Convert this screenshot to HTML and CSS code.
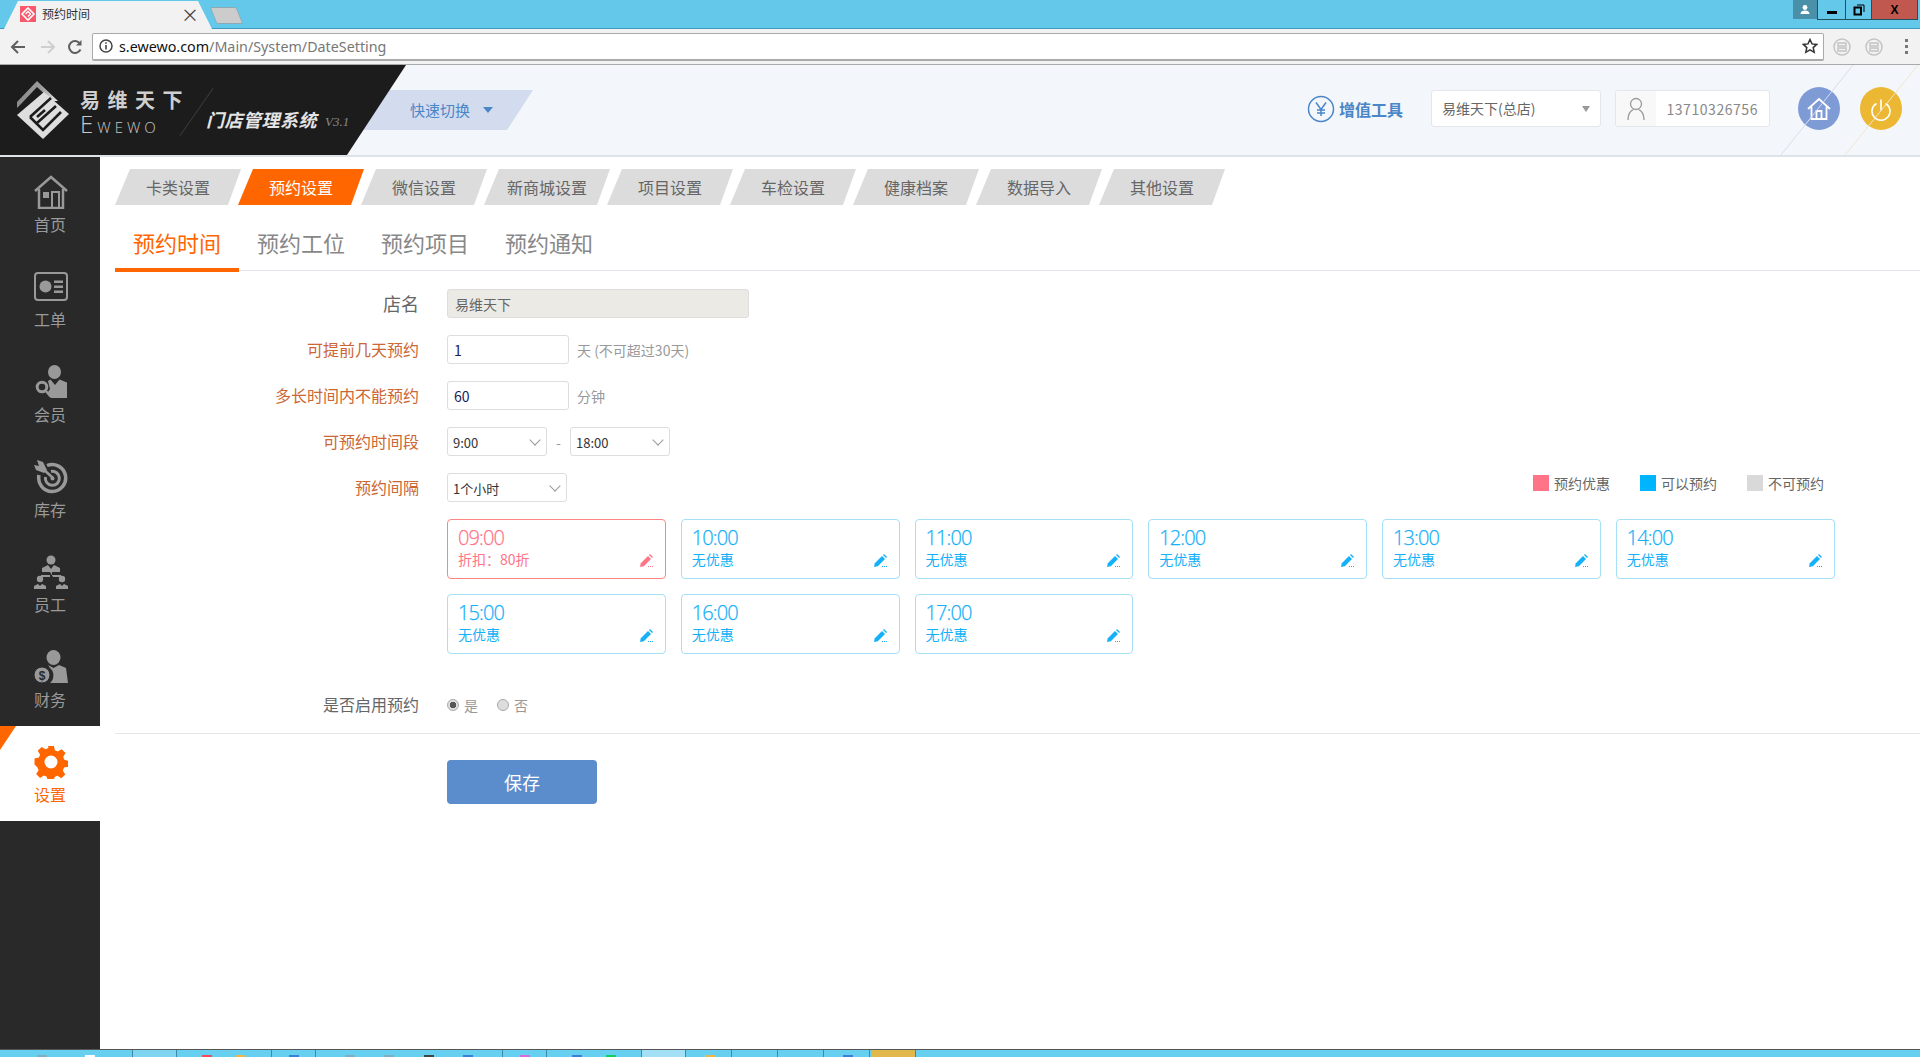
FILE: index.html
```html
<!DOCTYPE html>
<html lang="zh-CN">
<head>
  <meta charset="UTF-8" />
  <title>预约时间</title>
  <link rel="stylesheet" href="styles.css">
</head>
<body>
  <!-- browser window -->
  <div class="tabstrip">
    <div class="tab">
      <svg class="favicon" viewBox="0 0 16 16"><rect width="16" height="16" fill="#f9596a"/><path d="M8 2l6 6-6 6-6-6z" fill="none" stroke="#fff" stroke-width="1.6"/><path d="M5.5 8L8 5.5 10.5 8 8 10.5" fill="none" stroke="#fff" stroke-width="1.3"/></svg>
      <span class="tab-title">预约时间</span>
      <span class="tab-close">×</span>
    </div>
    <div class="newtab"></div>
    <div class="winbtns">
      <div class="win-user"><svg viewBox="0 0 12 12" width="12" height="12"><circle cx="6" cy="3.5" r="2.4" fill="#fff"/><path d="M1.5 10c0-2.500 2-3.500 4.500-3.500s4.500 1 4.500 3.500z" fill="#fff"/></svg></div>
      <div class="win-btn win-min"><i></i></div>
      <div class="win-btn win-max"><svg viewBox="0 0 12 12" width="12" height="12"><rect x="1.500" y="3.500" width="6.500" height="7" fill="none" stroke="#000" stroke-width="2"/><path d="M4 1h7v7" fill="none" stroke="#000"/></svg></div>
      <div class="win-btn win-close">X</div>
    </div>
  </div>
  <div class="toolbar">
    <svg class="nav-ico" viewBox="0 0 16 16"><path d="M15 8H2M8 2L2 8l6 6" fill="none" stroke="#5f5f5f" stroke-width="2"/></svg>
    <svg class="nav-ico" viewBox="0 0 16 16"><path d="M1 8h13M8 2l6 6-6 6" fill="none" stroke="#cfcfcf" stroke-width="2"/></svg>
    <svg class="nav-ico" viewBox="0 0 16 16"><path d="M13.500 10.500A6 6 0 1 1 13 4.500" fill="none" stroke="#5f5f5f" stroke-width="2"/><path d="M14.500 1v5.500H9z" fill="#5f5f5f"/></svg>
    <div class="omnibox">
      <svg class="info-ico" viewBox="0 0 14 14"><circle cx="7" cy="7" r="6" fill="none" stroke="#444" stroke-width="1.500"/><path d="M7 6v4.500M7 3.300v1.500" stroke="#444" stroke-width="1.600"/></svg>
      <span class="url"><b>s.ewewo.com</b>/Main/System/DateSetting</span>
      <svg class="star-ico" viewBox="0 0 16 16"><path d="M8 1.500l2 4.400 4.700.5-3.500 3.200 1 4.700L8 11.900l-4.200 2.400 1-4.700L1.300 6.400 6 5.900z" fill="none" stroke="#333" stroke-width="1.500"/></svg>
    </div>
    <div class="ext"><svg viewBox="0 0 18 18"><circle cx="9" cy="9" r="8" fill="none" stroke="#c4c4c4" stroke-width="1.500"/><path d="M5 5h8v3H5zM5 10h8v3H5z" fill="none" stroke="#c4c4c4" stroke-width="1.500"/></svg></div>
    <div class="ext"><svg viewBox="0 0 18 18"><circle cx="9" cy="9" r="8" fill="none" stroke="#c4c4c4" stroke-width="1.500"/><path d="M5 5h8v3H5zM5 10h8v3H5z" fill="none" stroke="#c4c4c4" stroke-width="1.500"/></svg></div>
    <div class="dots"><i></i><i></i><i></i></div>
  </div>

  <!-- app header -->
  <header class="topbar">
    <div class="brand">
      <svg class="brand-mark" viewBox="0 0 54 60">
        <defs><linearGradient id="chev" x1="0" y1="0" x2="1" y2="0"><stop offset="0" stop-color="#8a8a8a"/><stop offset=".6" stop-color="#9c9c9c"/><stop offset="1" stop-color="#ececec"/></linearGradient></defs>
        <path d="M1 22L21 1 42 21 36 21 21 7 5 24 1 28z" fill="url(#chev)"/>
        <path d="M1 35L28 12 53 34 27 59z" fill="#dedede"/>
        <path d="M14 37L35 18M14 37L27 50L45 32M21 37L29 30M21 43L40 26" fill="none" stroke="#1c1c1c" stroke-width="2.600"/>
      </svg>
      <div class="brand-name">
        <div class="brand-cn">易维天下</div>
        <div class="brand-en"><span>E</span>WEWO</div>
      </div>
      <div class="brand-slash"></div>
      <div class="brand-sys">门店管理系统</div>
      <div class="brand-ver">V3.1</div>
    </div>
    <div class="quick">快速切换<i class="caret"></i></div>
    <div class="topbar-right">
      <div class="addon">
        <svg viewBox="0 0 28 28" width="28" height="28"><circle cx="14" cy="14" r="12.500" fill="none" stroke="#4a86c8" stroke-width="1.500"/><path d="M9 7.500l5 7 5-7M14 14.500V21M10 15h8M10 18h8" fill="none" stroke="#4a86c8" stroke-width="1.500"/></svg>
        <span>增值工具</span>
      </div>
      <div class="shop">易维天下(总店)<i class="caret caret-gray"></i></div>
      <div class="account">
        <div class="account-ico"><svg viewBox="0 0 18 24" width="18" height="24"><circle cx="9" cy="7" r="5.500" fill="none" stroke="#999" stroke-width="1.300"/><path d="M1 23c0-6 3-9.500 5.500-10.500M17 23c0-6-3-9.500-5.500-10.500" fill="none" stroke="#999" stroke-width="1.300"/></svg></div>
        <div class="account-no">13710326756</div>
      </div>
      <div class="round round-home"><svg viewBox="0 0 24 24" width="24" height="24"><path d="M1 12L12 2l11 10M4.500 10v12h15V10M9.500 22v-8h5v8" fill="none" stroke="#fff" stroke-width="1.800"/></svg></div>
      <div class="round round-power"><svg viewBox="0 0 24 24" width="24" height="24"><path d="M7.500 6.500a9 9 0 1 0 9 0M12 2.500v11" fill="none" stroke="#fff" stroke-width="1.600"/></svg></div>
    </div>
    <svg class="topbar-deco" viewBox="0 0 140 90" width="140" height="90"><path d="M73 0L1 90" stroke="#d9def0"/><path d="M138 0L65 90" stroke="#f0e6cf"/></svg>
  </header>

  <div class="app">
    <aside class="sidebar">
      <a class="side-item">
        <svg viewBox="0 0 34 34"><path d="M1 16L17 2l16 14" fill="none" stroke="#999" stroke-width="2.500"/><path d="M5 14v19h24V14" fill="none" stroke="#999" stroke-width="2.500"/><rect x="9" y="17" width="6" height="6" fill="#999"/><path d="M18 33V17h7v16" fill="none" stroke="#999" stroke-width="2"/></svg>
        <span>首页</span>
      </a>
      <a class="side-item">
        <svg viewBox="0 0 34 34"><rect x="1" y="3" width="32" height="27" rx="3" fill="none" stroke="#999" stroke-width="2"/><circle cx="11.500" cy="16.500" r="6" fill="#999"/><path d="M20 10.500h9v2.500h-9zM20 15.500h9V18h-9zM20 20.500h9V23h-9z" fill="#999"/></svg>
        <span>工单</span>
      </a>
      <a class="side-item">
        <svg viewBox="0 0 34 34"><ellipse cx="20.500" cy="7" rx="6.500" ry="7" fill="#999"/><path d="M14 16l2.500-1.500L21 20l4.500-5.500 7.500 3V33H17l-3-6 2-3z" fill="#999"/><circle cx="8" cy="22" r="4.800" fill="none" stroke="#999" stroke-width="3"/><path d="M12 26l5 6" stroke="#999" stroke-width="2.500"/></svg>
        <span>会员</span>
      </a>
      <a class="side-item">
        <svg viewBox="0 0 34 34"><path d="M13 5.500A13.500 13.500 0 1 1 5 15" fill="none" stroke="#999" stroke-width="3.500"/><path d="M17 11.500A7 7 0 1 1 11.500 17" fill="none" stroke="#999" stroke-width="3"/><circle cx="18.500" cy="18.500" r="2" fill="#999"/><path d="M8 8l11 10" stroke="#999" stroke-width="2.500"/><path d="M3 0l6 2 4 8-3 3-8-3-2-5 5 1z" fill="#999"/></svg>
        <span>库存</span>
      </a>
      <a class="side-item">
        <svg viewBox="0 0 34 34"><circle cx="17" cy="5" r="4.500" fill="#999"/><path d="M8 17v-4l6-3 3 4 3-4 6 3v4z" fill="#999"/><path d="M16 17h2v3h9v2h-8M16 20H7v2h9" fill="#999"/><circle cx="6" cy="24" r="3.200" fill="#999"/><circle cx="28" cy="24" r="3.200" fill="#999"/><path d="M0 34v-3l4-2 2 2 2-2 4 2v3zM22 34v-3l4-2 2 2 2-2 4 2v3z" fill="#999"/></svg>
        <span>员工</span>
      </a>
      <a class="side-item">
        <svg viewBox="0 0 34 34"><ellipse cx="19.500" cy="7.500" rx="7" ry="7.500" fill="#999"/><path d="M14 15l5.500 3 5.500-3 7 3 2 15H16a10 10 0 0 0 0-15z" fill="#999"/><circle cx="8" cy="25" r="8" fill="#999" stroke="#292929"/><text x="8" y="29.500" font-size="12" font-family="Liberation Sans" font-weight="bold" text-anchor="middle" fill="#292929">$</text></svg>
        <span>财务</span>
      </a>
      <a class="side-item side-active">
        <svg viewBox="0 0 34 34"><path d="M14 1h6l1 4.500 3 1.300 4-2.500 4 4-2.500 4 1.300 3 4.200 1v6l-4.500 1-1.300 3 2.500 4-4 4-4-2.500-3 1.300-1 4.200h-6l-1-4.500-3-1.300-4 2.500-4-4 2.500-4-1.300-3L0 20v-6l4.500-1 1.300-3-2.500-4 4-4 4 2.500 3-1.300z" fill="#ff6600" transform="translate(0.500 0) scale(0.97)"/><circle cx="17" cy="17" r="6.500" fill="#fff"/></svg>
        <span>设置</span>
      </a>
    </aside>

    <main class="main">
      <nav class="tabs">
        <a class="tab-item">卡类设置</a>
        <a class="tab-item tab-on">预约设置</a>
        <a class="tab-item">微信设置</a>
        <a class="tab-item">新商城设置</a>
        <a class="tab-item">项目设置</a>
        <a class="tab-item">车检设置</a>
        <a class="tab-item">健康档案</a>
        <a class="tab-item">数据导入</a>
        <a class="tab-item">其他设置</a>
      </nav>
      <div class="subtabs">
        <a class="subtab subtab-on">预约时间</a>
        <a class="subtab">预约工位</a>
        <a class="subtab">预约项目</a>
        <a class="subtab">预约通知</a>
      </div>

      <form class="form">
        <div class="row">
          <label class="label label-big">店名</label>
          <input class="input input-shop" type="text" value="易维天下" disabled />
        </div>
        <div class="row">
          <label class="label label-req">可提前几天预约</label>
          <input class="input input-num" type="text" value="1" />
          <span class="hint">天 (不可超过30天)</span>
        </div>
        <div class="row">
          <label class="label label-req">多长时间内不能预约</label>
          <input class="input input-num" type="text" value="60" />
          <span class="hint">分钟</span>
        </div>
        <div class="row">
          <label class="label label-req">可预约时间段</label>
          <div class="select"><select><option>9:00</option></select></div>
          <span class="dash">-</span>
          <div class="select"><select><option>18:00</option></select></div>
        </div>
        <div class="row">
          <label class="label label-req">预约间隔</label>
          <div class="select select-wide"><select><option>1个小时</option></select></div>
          <div class="legend">
            <span class="legend-item"><i class="sw sw-red"></i>预约优惠</span>
            <span class="legend-item"><i class="sw sw-blue"></i>可以预约</span>
            <span class="legend-item"><i class="sw sw-gray"></i>不可预约</span>
          </div>
        </div>

        <div class="slots" id="slots"></div>

        <div class="row row-radio">
          <label class="label label-plain">是否启用预约</label>
          <label class="radio"><input type="radio" name="on" checked />是</label>
          <label class="radio"><input type="radio" name="on" />否</label>
        </div>
        <div class="divider"></div>
        <button class="save" type="button">保存</button>
      </form>
    </main>
  </div>

  <div class="taskbar">
    <div class="task task-start"><i class="tk-a"></i><i class="tk-w"></i></div>
    <div class="task task-s task-light"></div>
    <div class="task task-m"><i class="tk-r"></i><i class="tk-y"></i></div>
    <div class="task task-s"><i class="tk-b"></i></div>
    <div class="task task-l"><i class="tk-a"></i><i class="tk-a"></i><i class="tk-d"></i><i class="tk-b"></i></div>
    <div class="task task-s"><i class="tk-m"></i></div>
    <div class="task task-m"><i class="tk-b"></i><i class="tk-g"></i></div>
    <div class="task task-s task-pale"></div>
    <div class="task task-s task-gap"><i class="tk-y"></i></div>
    <div class="task task-s task-gap"></div>
    <div class="task task-s task-gap"></div>
    <div class="task task-s task-gap"><i class="tk-b"></i></div>
    <div class="task task-s task-gap task-yellow"></div>
    <div class="task task-rest"></div>
  </div>

  <script>
    const slots = [
      { time: "09:00", note: "折扣：80折", sale: true },
      { time: "10:00", note: "无优惠" },
      { time: "11:00", note: "无优惠" },
      { time: "12:00", note: "无优惠" },
      { time: "13:00", note: "无优惠" },
      { time: "14:00", note: "无优惠" },
      { time: "15:00", note: "无优惠" },
      { time: "16:00", note: "无优惠" },
      { time: "17:00", note: "无优惠" }
    ];
    const pencil = `<svg class="slot-edit" viewBox="0 0 13 13"><path d="M0 13l.8-3.800L8 2l3 3-7.200 7.200z" fill="currentColor"/><path d="M9 1l1-1 3 3-1 1z" fill="currentColor"/><path d="M8 12.500h1M10 12.500h1M12 12.500h1" stroke="currentColor"/></svg>`;
    document.getElementById("slots").innerHTML = slots.map(s => `
      <div class="slot ${s.sale ? "slot-sale" : ""}">
        <div class="slot-time">${s.time}</div>
        <div class="slot-note">${s.note}</div>
        ${pencil}
      </div>
    `).join("");
  </script>
</body>
</html>
```

FILE: styles.css
```css
* {
  box-sizing: border-box;
}
html, body {
  height: 100%;
}
body {
  margin: 0;
  height: 1057px;
  overflow: hidden;
  display: flex;
  flex-direction: column;
  background: #fff;
  font-family: "Noto Sans CJK SC", "Liberation Sans", sans-serif;
  font-size: 14px;
  color: #666;
}
a {
  text-decoration: none;
}

/* browser window */
.tabstrip {
  position: relative;
  height: 29px;
  background: #64c8ea;
  border-bottom: 1px solid #3f9bbd;
  flex: none;
}
.tab {
  position: absolute;
  left: 4px;
  top: 1px;
  width: 208px;
  height: 28px;
  display: flex;
  align-items: center;
  padding: 0 12px 3px 16px;
  background: #f2f2f2;
  clip-path: polygon(14px 0, 194px 0, 100% 100%, 0 100%);
}
.favicon {
  width: 16px;
  height: 16px;
  flex: none;
}
.tab-title {
  margin-left: 6px;
  font-size: 12px;
  color: #333;
}
.tab-close {
  margin-left: auto;
  font-size: 18px;
  line-height: 1;
  color: #444;
  padding-right: 1px;
}
.newtab {
  position: absolute;
  left: 210px;
  top: 7px;
  width: 33px;
  height: 17px;
  background: #ccc;
  border: 1px solid #8fa9b3;
  border-radius: 2px;
  transform: skewX(22deg) scaleX(0.8);
}
.winbtns {
  position: absolute;
  right: 2px;
  top: 0;
  display: flex;
  height: 20px;
}
.win-user {
  width: 24px;
  height: 19px;
  margin-right: 1px;
  background: #4a90a8;
  display: flex;
  align-items: center;
  justify-content: center;
}
.win-btn {
  height: 20px;
  border: 1px solid #23505f;
  border-top: 0;
  margin-left: -1px;
  display: flex;
  align-items: center;
  justify-content: center;
}
.win-min {
  width: 29px;
}
.win-min i {
  width: 10px;
  height: 3px;
  background: #000;
  margin-top: 5px;
}
.win-max {
  width: 27px;
}
.win-close {
  width: 47px;
  background: #c0584f;
  color: #000;
  font-size: 12px;
  font-weight: bold;
  font-family: "Liberation Sans", sans-serif;
}
.toolbar {
  height: 36px;
  flex: none;
  display: flex;
  align-items: center;
  background: #f2f2f2;
  border-bottom: 1px solid #aaa;
  padding-left: 10px;
}
.nav-ico {
  width: 16px;
  height: 16px;
  margin-right: 12px;
  flex: none;
}
.nav-ico:nth-child(2) {
  margin-left: 2px;
  margin-right: 11px;
}
.omnibox {
  width: 1732px;
  height: 28px;
  margin-left: -3px;
  background: #fff;
  border: 1px solid #aaa;
  border-bottom-width: 2px;
  border-radius: 2px;
  display: flex;
  align-items: center;
  padding: 0 5px 0 6px;
}
.info-ico {
  width: 14px;
  height: 14px;
  flex: none;
}
.url {
  margin-left: 6px;
  font-family: "Noto Sans", sans-serif;
  font-size: 14.300px;
  color: #777;
}
.url b {
  font-weight: normal;
  color: #111;
}
.star-ico {
  width: 16px;
  height: 16px;
  margin-left: auto;
}
.ext {
  width: 18px;
  height: 18px;
  margin-left: 9px;
  margin-right: 5px;
}
.ext svg {
  display: block;
}
.dots {
  margin-left: 17px;
  display: flex;
  flex-direction: column;
  gap: 3px;
}
.dots i {
  width: 3px;
  height: 3px;
  background: #777;
}

/* app header */
.topbar {
  position: relative;
  height: 92px;
  flex: none;
  display: flex;
  background: #f3f6fa;
  border-bottom: 2px solid #dde3e8;
}
.brand {
  position: relative;
  z-index: 1;
  width: 406px;
  height: 90px;
  flex: none;
  background: #1c1c1c;
  clip-path: polygon(0 0, 100% 0, 347px 100%, 0 100%);
  color: #ddd;
}
.brand-mark {
  position: absolute;
  left: 16px;
  top: 15px;
  width: 54px;
  height: 60px;
}
.brand-name {
  position: absolute;
  left: 80px;
  top: 23px;
}
.brand-cn {
  font-size: 20px;
  line-height: 24px;
  letter-spacing: 7.500px;
  font-weight: bold;
  color: #cfcfcf;
}
.brand-en {
  font-family: "Open Sans", sans-serif;
  font-weight: 300;
  font-size: 15px;
  letter-spacing: 4px;
  line-height: 24px;
  color: #c8c8c8;
}
.brand-en span {
  font-size: 24px;
  line-height: 24px;
}
.brand-slash {
  position: absolute;
  left: 196px;
  top: 18px;
  width: 1px;
  height: 58px;
  background: #3b3b3b;
  transform: rotate(35deg);
}
.brand-sys {
  position: absolute;
  left: 206px;
  top: 42px;
  font-size: 18px;
  line-height: 24px;
  font-style: italic;
  font-weight: bold;
  color: #e4e4e4;
  letter-spacing: .5px;
}
.brand-ver {
  position: absolute;
  left: 325px;
  top: 48px;
  font-family: "Liberation Serif", serif;
  font-style: italic;
  font-size: 13px;
  line-height: 18px;
  color: #888;
}
.quick {
  width: 172px;
  height: 40px;
  margin: 25px 0 0 -45px;
  padding: 0 0 2px 49px;
  background: #d3dcee;
  clip-path: polygon(26px 0, 100% 0, 146px 100%, 0 100%);
  display: flex;
  align-items: center;
  color: #4a86c8;
  font-size: 15px;
}
.caret {
  width: 0;
  height: 0;
  margin-left: 13px;
  margin-top: 2px;
  border: 5px solid transparent;
  border-top: 6px solid #4a86c8;
  border-bottom: 0;
}
.caret-gray {
  position: absolute;
  right: 10px;
  top: 15px;
  margin: 0;
  border-width: 4px;
  border-top-width: 6px;
  border-bottom: 0;
  border-top-color: #999;
}
.topbar-right {
  margin-left: auto;
  display: flex;
  align-items: center;
  height: 90px;
  padding: 0 18px 3px 0;
}
.addon {
  display: flex;
  align-items: center;
  gap: 4px;
  margin-right: 28px;
  color: #4a86c8;
  font-size: 16px;
  font-weight: bold;
}
.shop {
  position: relative;
  width: 170px;
  height: 37px;
  background: #fff;
  border: 1px solid #e3e6ea;
  border-radius: 3px;
  padding: 0 0 2px 10px;
  display: flex;
  align-items: center;
  font-size: 14px;
}
.account {
  display: flex;
  width: 155px;
  height: 37px;
  margin-left: 14px;
  margin-right: 28px;
  background: #fff;
  border: 1px solid #e3e6ea;
  border-radius: 3px;
  overflow: hidden;
}
.account-ico {
  width: 40px;
  background: #f8f8f8;
  display: flex;
  align-items: center;
  justify-content: center;
}
.account-no {
  flex: 1;
  text-align: right;
  padding-right: 11px;
  line-height: 37px;
  font-size: 14px;
  letter-spacing: .55px;
  color: #888;
}
.round {
  width: 42px;
  height: 43px;
  border-radius: 50%;
  display: flex;
  align-items: center;
  justify-content: center;
}
.round-home {
  background: #7f9bd6;
  margin-right: 20px;
}
.round-power {
  background: #ecb733;
}
.topbar-deco {
  position: absolute;
  right: 0;
  top: 0;
  pointer-events: none;
}

/* sidebar + content */
.app {
  flex: 1;
  display: flex;
  min-height: 0;
}
.sidebar {
  width: 100px;
  flex: none;
  margin-top: -1px;
  background: #292929;
}
.side-item {
  position: relative;
  height: 95px;
  padding-top: 19px;
  display: flex;
  flex-direction: column;
  align-items: center;
  color: #9a9a9a;
  font-size: 16px;
}
.side-item svg {
  width: 34px;
  height: 34px;
  margin-left: 2px;
  flex: none;
}
.side-item span {
  line-height: 22px;
  margin-top: 4px;
}
.side-active {
  background: #fff;
  color: #ff6600;
}
.side-active::before {
  content: "";
  position: absolute;
  left: 0;
  top: 0;
  width: 16px;
  height: 24px;
  background: #ff6600;
  clip-path: polygon(0 0, 100% 0, 0 100%);
}
.main {
  flex: 1;
  min-width: 0;
  padding-top: 12px;
}
.tabs {
  display: flex;
  margin-left: 15px;
}
.tab-item {
  width: 126px;
  height: 36px;
  margin-right: -3px;
  flex: none;
  display: flex;
  align-items: center;
  justify-content: center;
  background: #dcdcdc;
  color: #666;
  font-size: 16px;
  clip-path: polygon(15px 0, 100% 0, calc(100% - 13px) 100%, 0 100%);
}
.tab-on {
  background: #ff6600;
  color: #fff;
}
.subtabs {
  display: flex;
  height: 66px;
  margin-left: 15px;
  border-bottom: 1px solid #e2e6ea;
}
.subtab {
  width: 124px;
  height: 67px;
  padding-top: 22px;
  border-bottom: 4px solid transparent;
  text-align: center;
  font-size: 22px;
  line-height: 30px;
  color: #888;
}
.subtab-on {
  color: #ff6600;
  border-bottom-color: #ff6600;
}
.form {
  padding-top: 18px;
}
.row {
  display: flex;
  align-items: center;
  height: 29px;
  margin-bottom: 17px;
  padding-left: 15px;
}
.label {
  width: 304px;
  margin-right: 28px;
  padding-bottom: 2px;
  flex: none;
  text-align: right;
  font-size: 16px;
}
.label-big {
  font-size: 18px;
  color: #666;
}
.label-req {
  color: #cc6633;
}
.label-plain {
  color: #666;
}
.input {
  height: 29px;
  padding: 0 6px;
  border: 1px solid #ddd;
  border-radius: 3px;
  font: inherit;
  color: #1a1a5e;
  background: #fff;
  outline: none;
}
.input-shop {
  width: 302px;
  padding-left: 7px;
  font-size: 14px;
  color: #666;
  background: #ebeae4;
}
.input-num {
  width: 122px;
}
.hint {
  margin-left: 8px;
  font-size: 14px;
  color: #999;
}
.select {
  position: relative;
  width: 100px;
}
.select::after {
  content: "";
  position: absolute;
  right: 8px;
  top: 9px;
  width: 7px;
  height: 7px;
  border-right: 1px solid #999;
  border-bottom: 1px solid #999;
  transform: rotate(45deg);
  pointer-events: none;
}
.select select {
  display: block;
  width: 100%;
  height: 29px;
  padding: 1px 5px 0;
  border: 1px solid #ddd;
  border-radius: 3px;
  background: #fff;
  color: #333;
  font: inherit;
  font-size: 13px;
  appearance: none;
}
.select-wide {
  width: 120px;
}
.dash {
  width: 23px;
  text-align: center;
  color: #999;
}
.legend {
  margin-left: auto;
  margin-right: 96px;
  padding-bottom: 9px;
  display: flex;
  gap: 30px;
}
.legend-item {
  display: flex;
  align-items: center;
  gap: 5px;
  font-size: 14px;
  color: #666;
}
.sw {
  width: 16px;
  height: 16px;
}
.sw-red {
  background: #ff7487;
}
.sw-blue {
  background: #00b4ff;
}
.sw-gray {
  background: #d9d9d9;
}
.slots {
  display: grid;
  grid-template-columns: repeat(6, 218.750px);
  gap: 15px;
  margin-left: 347px;
}
.slot {
  position: relative;
  height: 60px;
  padding: 6px 10px;
  border: 1px solid #a4e0f6;
  border-radius: 4px;
  color: #14b0f8;
}
.slot-sale {
  border-color: #ff8585;
  color: #ff7487;
}
.slot-time {
  font-family: "Open Sans", sans-serif;
  font-weight: 300;
  font-size: 20px;
  line-height: 24px;
  letter-spacing: -.9px;
  -webkit-text-stroke: .25px currentColor;
}
.slot-note {
  font-size: 14px;
  line-height: 18px;
}
.slot-edit {
  position: absolute;
  right: 12px;
  bottom: 11px;
  width: 13px;
  height: 13px;
}
.row-radio {
  margin-top: 36px;
  margin-bottom: 14px;
}
.radio {
  display: flex;
  align-items: center;
  width: 50px;
  font-size: 14px;
  color: #999;
}
.radio input {
  appearance: none;
  width: 12px;
  height: 12px;
  margin: 0 5px 0 0;
  border: 1px solid #aaa;
  border-radius: 50%;
  background: #ddd;
}
.radio input:checked {
  background: radial-gradient(circle, #555 0 3px, #ddd 3.500px);
}
.divider {
  height: 1px;
  margin-left: 15px;
  background: #e6e6e6;
}
.save {
  display: block;
  width: 150px;
  height: 44px;
  margin: 26px 0 0 347px;
  border: 0;
  border-radius: 4px;
  background: #5b8ccc;
  color: #fff;
  font: inherit;
  font-size: 18px;
}

/* windows taskbar, only the top edge is in shot */
.taskbar {
  height: 8px;
  flex: none;
  display: flex;
  background: #67cfef;
  border-top: 1px solid #555;
}
.task {
  display: flex;
  align-items: flex-end;
  justify-content: space-evenly;
  border-right: 1px solid #3d8aa5;
}
.task-start {
  width: 133px;
}
.task-s {
  width: 44px;
}
.task-m {
  width: 95px;
}
.task-l {
  width: 187px;
}
.task-gap {
  margin-left: 2px;
}
.task-rest {
  flex: 1;
  border: 0;
}
.task-light {
  background: #7fd5f0;
}
.task-pale {
  background: #a3e0f5;
}
.task-yellow {
  background: #e0b84c;
}
.task i {
  width: 10px;
  height: 2px;
}
.tk-a {
  background: #7fb0c0;
}
.tk-w {
  background: #fff;
}
.tk-r {
  background: #ef4a5e;
}
.tk-y {
  background: #e8b84c;
}
.tk-b {
  background: #3a7fd8;
}
.tk-d {
  background: #444;
}
.tk-m {
  background: #d96ae0;
}
.tk-g {
  background: #12d060;
}
```
